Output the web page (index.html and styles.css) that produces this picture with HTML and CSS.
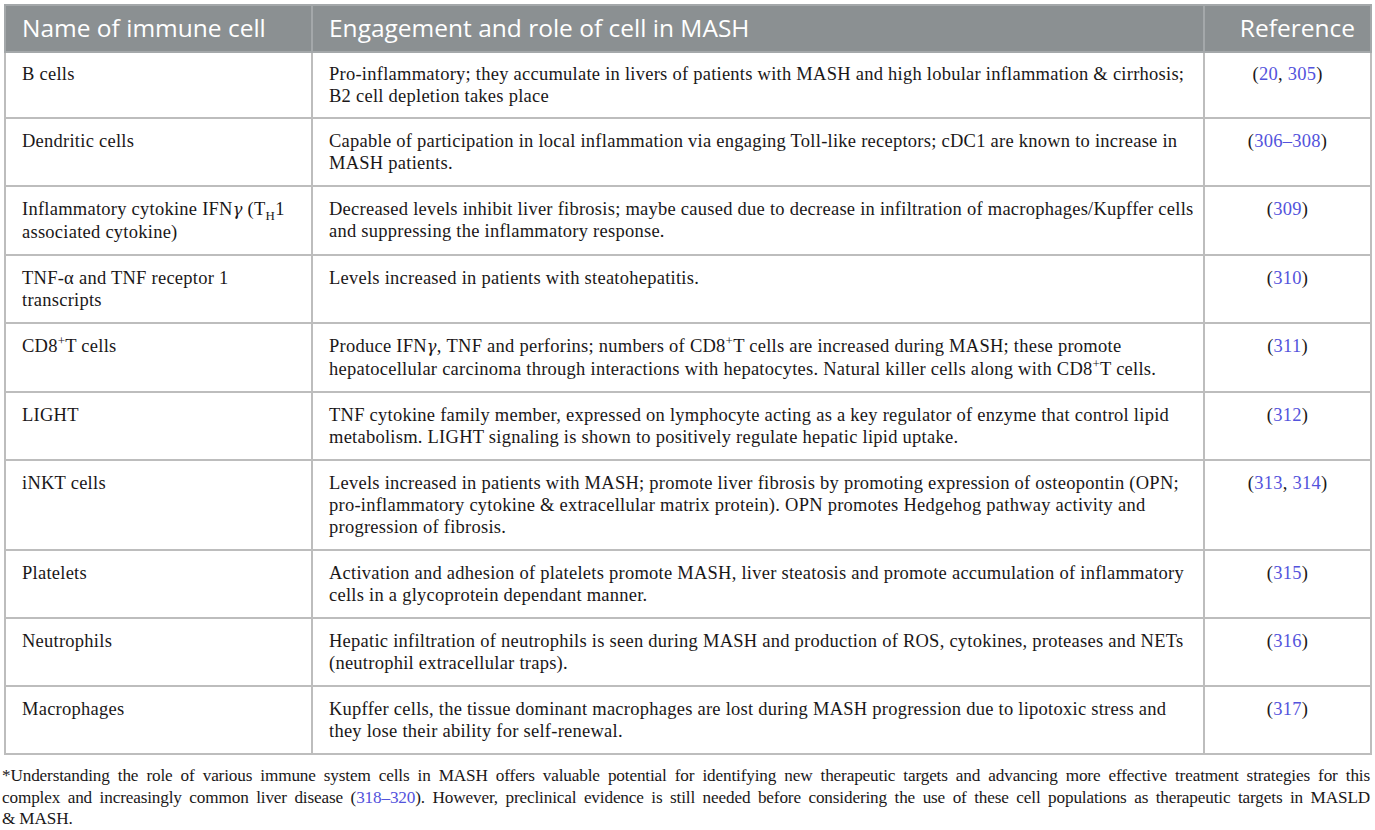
FILE: index.html
```html
<!DOCTYPE html>
<html lang="en">

<head>
  <meta charset="UTF-8">
  <meta name="viewport" content="width=device-width, initial-scale=1.0">
  <title>Immune cells in MASH</title>
  <link rel="stylesheet" href="styles.css">
</head>

<body>

  <div class="page">
    <table class="cells-table">
      <colgroup>
        <col class="col-name">
        <col class="col-role">
        <col class="col-ref">
      </colgroup>
      <thead>
        <tr>
          <th>Name of immune cell</th>
          <th>Engagement and role of cell in MASH</th>
          <th class="ref-head">Reference</th>
        </tr>
      </thead>
      <tbody>
        <tr>
          <td>B cells</td>
          <td>Pro-inflammatory; they accumulate in livers of patients with MASH and high lobular inflammation &amp; cirrhosis;<br>B2 cell depletion takes place</td>
          <td class="ref">(<a href="#">20</a>, <a href="#">305</a>)</td>
        </tr>
        <tr>
          <td>Dendritic cells</td>
          <td>Capable of participation in local inflammation via engaging Toll-like receptors; cDC1 are known to increase in<br>MASH patients.</td>
          <td class="ref">(<a href="#">306&ndash;308</a>)</td>
        </tr>
        <tr>
          <td>Inflammatory cytokine IFN<i class="greek">&gamma;</i> (T<sub>H</sub>1 associated cytokine)</td>
          <td>Decreased levels inhibit liver fibrosis; maybe caused due to decrease in infiltration of macrophages/Kupffer cells<br>and suppressing the inflammatory response.</td>
          <td class="ref">(<a href="#">309</a>)</td>
        </tr>
        <tr>
          <td>TNF-&alpha; and TNF receptor 1 transcripts</td>
          <td>Levels increased in patients with steatohepatitis.</td>
          <td class="ref">(<a href="#">310</a>)</td>
        </tr>
        <tr>
          <td>CD8<sup>+</sup>T cells</td>
          <td>Produce IFN<i class="greek">&gamma;</i>, TNF and perforins; numbers of CD8<sup>+</sup>T cells are increased during MASH; these promote<br>hepatocellular carcinoma through interactions with hepatocytes. Natural killer cells along with CD8<sup>+</sup>T cells.</td>
          <td class="ref">(<a href="#">311</a>)</td>
        </tr>
        <tr>
          <td>LIGHT</td>
          <td>TNF cytokine family member, expressed on lymphocyte acting as a key regulator of enzyme that control lipid<br>metabolism. LIGHT signaling is shown to positively regulate hepatic lipid uptake.</td>
          <td class="ref">(<a href="#">312</a>)</td>
        </tr>
        <tr>
          <td>iNKT cells</td>
          <td>Levels increased in patients with MASH; promote liver fibrosis by promoting expression of osteopontin (OPN;<br>pro-inflammatory cytokine &amp; extracellular matrix protein). OPN promotes Hedgehog pathway activity and<br>progression of fibrosis.</td>
          <td class="ref">(<a href="#">313</a>, <a href="#">314</a>)</td>
        </tr>
        <tr>
          <td>Platelets</td>
          <td>Activation and adhesion of platelets promote MASH, liver steatosis and promote accumulation of inflammatory<br>cells in a glycoprotein dependant manner.</td>
          <td class="ref">(<a href="#">315</a>)</td>
        </tr>
        <tr>
          <td>Neutrophils</td>
          <td>Hepatic infiltration of neutrophils is seen during MASH and production of ROS, cytokines, proteases and NETs<br>(neutrophil extracellular traps).</td>
          <td class="ref">(<a href="#">316</a>)</td>
        </tr>
        <tr>
          <td>Macrophages</td>
          <td>Kupffer cells, the tissue dominant macrophages are lost during MASH progression due to lipotoxic stress and<br>they lose their ability for self-renewal.</td>
          <td class="ref">(<a href="#">317</a>)</td>
        </tr>
      </tbody>
    </table>

    <!-- Table footnote -->
    <p class="footnote">
      <span class="fn-line">*Understanding the role of various immune system cells in MASH offers valuable potential for identifying new therapeutic targets and advancing more effective treatment strategies for this</span>
      <span class="fn-line">complex and increasingly common liver disease (<a href="#">318&ndash;320</a>). However, preclinical evidence is still needed before considering the use of these cell populations as therapeutic targets in MASLD</span>
      <span class="fn-line fn-last">&amp; MASH.</span>
    </p>
  </div>

</body>

</html>
```

FILE: styles.css
```css
/* Global Styles */
body {
  margin: 0;
  padding: 0;
  background-color: #fff;
  color: #1a1718;
  font-family: "Liberation Serif", "Times New Roman", serif;
}

.page {
  padding: 4px 5px 0 4px;
}

a {
  color: #5353dc;
  text-decoration: none;
}

/* Table */
.cells-table {
  width: 1366px;
  border-collapse: collapse;
  table-layout: fixed;
  border: 2px solid #bdbdbd;
}

.col-name {
  width: 307px;
}

.col-role {
  width: 892px;
}

.col-ref {
  width: 167px;
}

.cells-table th {
  background-color: #8b9092;
  color: #fff;
  font-family: "Open Sans", Arial, sans-serif;
  font-weight: 400;
  font-size: 24.5px;
  text-align: left;
  padding: 7px 8px 8px 16px;
  border: 2px solid #a4a8aa;
  line-height: 30px;
}

.cells-table th.ref-head {
  text-align: right;
  padding-right: 15px;
}

.cells-table td {
  font-size: 18.5px;
  letter-spacing: 0.25px;
  line-height: 22px;
  vertical-align: top;
  padding: 11px 2px 11px 16px;
  border: 2px solid #bdbdbd;
}

.cells-table tbody tr:first-child td {
  padding-top: 10px;
  padding-bottom: 10px;
}

.cells-table td.ref {
  text-align: center;
  padding-left: 4px;
  padding-right: 4px;
}

.greek {
  font-family: "DejaVu Serif", serif;
  font-size: 0.88em;
}

sup,
sub {
  font-size: 0.7em;
  line-height: 0;
}

/* Footnote */
.footnote {
  margin: 10px 0 0 -2px;
  width: 1368px;
  font-size: 17.2px;
  letter-spacing: -0.15px;
  line-height: 21.5px;
}

.fn-line {
  display: block;
  text-align: justify;
  text-align-last: justify;
}

.fn-line.fn-last {
  text-align-last: left;
}
```
